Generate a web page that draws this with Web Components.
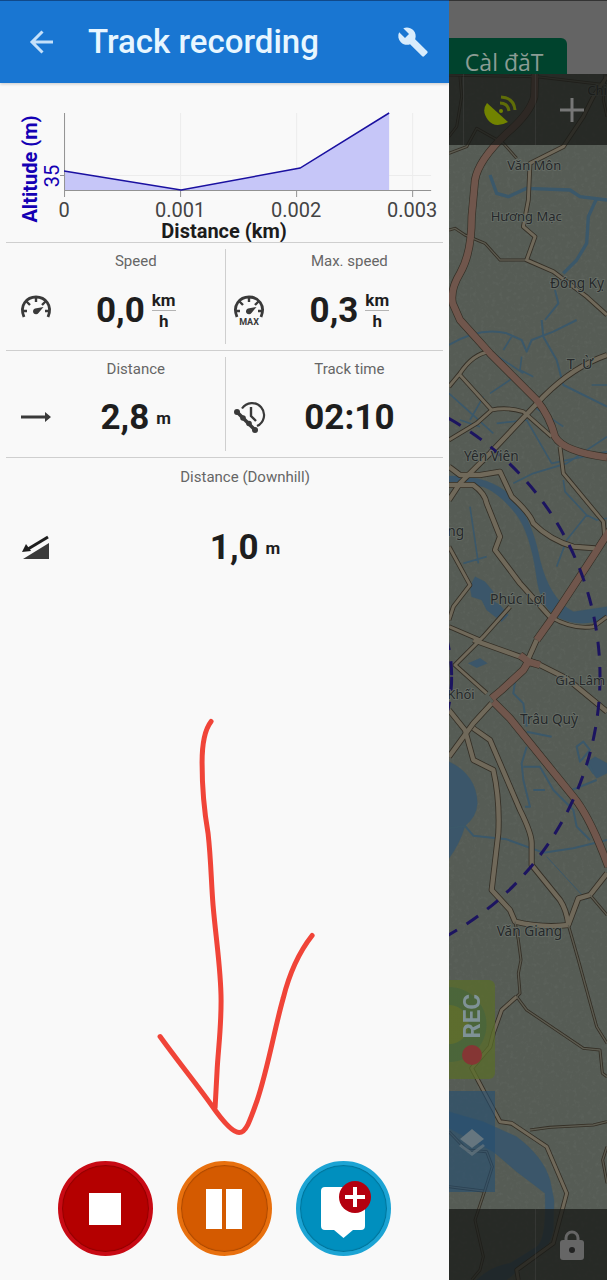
<!DOCTYPE html>
<html lang="en">
<head>
<meta charset="utf-8">
<meta name="viewport" content="width=device-width, initial-scale=1">
<title>Track recording</title>
<style>
  body {
    margin: 0;
    font-family: Roboto, sans-serif;
    background: #585e57;
  }
</style>
</head>
<body>
<track-app></track-app>

<script>
function define(name, html, setup) {
  const template = document.createElement('template');
  template.innerHTML = html;
  window.customElements.define(name, class extends HTMLElement {
    constructor() {
      super();
      this.attachShadow({mode: 'open'});
      this.shadowRoot.appendChild(template.content.cloneNode(true));
    }
    connectedCallback() {
      if (setup) setup(this, this.shadowRoot);
    }
  });
}

/* Drawer header */
define('drawer-header', `
  <style>
    :host {
      display: block;
      background: #1976d2;
      border-top: 1px solid #10498a;
      box-shadow: 0 1px 3px rgba(0, 0, 0, .2);
      color: #e8f6ff;
    }
    header {
      display: flex;
      align-items: center;
      height: 82px;
      padding: 0 18px 0 24px;
    }
    h1 {
      flex: 1;
      margin: 0 0 0 28px;
      font-size: 33px;
      font-weight: 500;
      line-height: 40px;
      white-space: nowrap;
    }
    button {
      display: grid;
      place-items: center;
      width: 36px;
      height: 40px;
      padding: 0;
      border: 0;
      background: none;
      color: inherit;
    }
    svg { display: block; }
  </style>
  <header>
    <button aria-label="Back">
      <svg width="36" height="36" viewBox="0 0 36 36" fill="none" stroke="#c4e0fa" stroke-width="3"><path d="M29 18H8M18.500 7.500 8 18l10.500 10.500"/></svg>
    </button>
    <h1><slot></slot></h1>
    <button aria-label="Settings">
      <svg width="32" height="32" viewBox="0 0 24 24" fill="#d8ecfc"><path d="M22.700 19l-9.100-9.100c.9-2.300.4-5-1.500-6.900-2-2-5-2.400-7.400-1.300L9 6 6 9 1.600 4.700C.4 7.100.9 10.100 2.900 12.100c1.900 1.900 4.600 2.400 6.900 1.500l9.100 9.100c.4.4 1 .4 1.400 0l2.300-2.300c.5-.4.5-1.100.1-1.400z"/></svg>
    </button>
  </header>
`);

/* Altitude profile */
define('altitude-chart', `
  <style>
    :host { display: block; }
    svg { display: block; width: 100%; }
    text { font-size: 20px; fill: #444; text-anchor: middle; }
    .title { font-weight: 700; fill: #1c1c1c; }
    .alt { fill: #1400b4; }
  </style>
  <svg viewBox="0 83 449 159" role="img" aria-label="Altitude by distance">
    <path d="M180.500 113v77M296.500 113v77M412.500 113v77M64 175.500h367" stroke="#ececec"/>
    <path d="M64 171 181 190 300 168 389 113V190H64z" fill="#c6c6f8"/>
    <path d="M64.500 113v84M60 175.500h4M64 190.500h367M180.500 190v7M296.500 190v7M412.500 190v7" fill="none" stroke="#929292"/>
    <path d="M64 171 181 190 300 168 389 113" fill="none" stroke="#1a10a0" stroke-width="1.500"/>
    <text x="64" y="217">0</text>
    <text x="180" y="217">0.001</text>
    <text x="296" y="217">0.002</text>
    <text x="412" y="217">0.003</text>
    <text class="title" x="224" y="238">Distance (km)</text>
    <text class="title alt" transform="translate(37 169) rotate(-90)">Altitude (m)</text>
    <text class="alt" transform="translate(59 176) rotate(-90)">35</text>
  </svg>
`);

/* One measured value: icon in its slot, label, number and unit */
define('stat-cell', `
  <style>
    :host {
      display: grid;
      grid-template: 36px 1fr / 30px 1fr;
      align-items: center;
      padding: 0 4px 0 15px;
      color: #1e1e1e;
    }
    :host([divided]) {
      margin: 6px 0;
      padding: 0 8px;
      border-left: 1px solid #cfcfcf;
      grid-template-rows: 24px 1fr;
    }
    .label {
      grid-column: 2;
      color: #666;
      font-size: 15px;
      line-height: 20px;
      text-align: center;
      white-space: nowrap;
    }
    .icon, .value { align-self: start; }
    .icon {
      height: 30px;
      margin-top: 15px;
      color: #3a3a3a;
    }
    .value {
      display: flex;
      align-items: center;
      justify-content: center;
      gap: 7px;
      margin-top: 11px;
      font-size: 35px;
      font-weight: 700;
      line-height: 40px;
    }
    :host([divided]) .value { margin-top: 17px; }
    :host([divided]) .icon { margin-top: 21px; }
    :host([tall]) { grid-template-rows: 38px 1fr; }
    :host([tall]) .value { margin-top: 32px; }
    :host([tall]) .icon { margin-top: 36px; }
    .unit {
      font-size: 17px;
      font-weight: 700;
      line-height: 20px;
      text-align: center;
    }
    .over {
      display: block;
      border-top: 1px solid #b4b4b4;
    }
    .unit:empty { display: none; }
  </style>
  <span class="label"></span>
  <span class="icon"><slot></slot></span>
  <span class="value"><span class="number"></span><span class="unit"></span></span>
`, (host, root) => {
  root.querySelector('.label').textContent = host.getAttribute('label');
  root.querySelector('.number').textContent = host.getAttribute('value');
  const [top, bottom] = (host.getAttribute('unit') || '').split('/');
  const unit = root.querySelector('.unit');
  unit.textContent = top;
  if (bottom) {
    const over = document.createElement('span');
    over.className = 'over';
    over.textContent = bottom;
    unit.appendChild(over);
  }
});

define('stat-icon', `
  <style>
    :host { display: block; width: 30px; height: 30px; }
    svg { display: block; overflow: visible; }
    text { font-size: 9px; font-weight: 700; text-anchor: middle; }
  </style>
  <svg width="30" height="30" viewBox="0 0 30 30" fill="currentColor"></svg>
`, (host, root) => {
  const gauge = `
    <path d="M3 23C-2 11 6 3 15 3s17 8 12 20" fill="none" stroke="currentColor" stroke-width="2.800"/>
    <path d="M15 3v5M5.500 7.500l3.500 3.500M24.500 7.500 21 11M2 17h4M24 17h4" stroke="currentColor" stroke-width="2.400"/>
    <path d="M14 14.500 22.500 13 17.500 19a3 3 0 1 1-3.500-4.500z"/>`;
  const icons = {
    speed: gauge,
    max: gauge + '<text x="15" y="31">MAX</text>',
    distance: '<path d="M0 13.500h24V10l6 5-6 5v-3.500H0z"/>',
    time: `
      <path d="M8 6.500A12 12 0 1 1 23 24" fill="none" stroke="currentColor" stroke-width="2.200"/>
      <path d="M17 5v9l5 5" fill="none" stroke="currentColor" stroke-width="2.400"/>
      <path d="M3 10 21 28" stroke="currentColor" stroke-width="3.500"/>
      <circle cx="3" cy="10" r="3"/><circle cx="9" cy="16" r="2.800"/><circle cx="15" cy="21.500" r="2.800"/><circle cx="21" cy="28" r="3"/>`,
    downhill: `
      <path d="M2 27 28 11v16z"/>
      <path d="M27 5 7 17" stroke="#1e1e1e" stroke-width="3"/>
      <path d="M1 20 5 12l5 7z" fill="#1e1e1e"/>`
  };
  root.querySelector('svg').innerHTML = icons[host.getAttribute('name')];
});

define('stat-grid', `
  <style>
    :host { display: block; padding: 0 6px; }
    .row {
      display: grid;
      grid-template-columns: 1fr 1fr;
      height: 107px;
      box-sizing: border-box;
      border-top: 1px solid #cfcfcf;
    }
    .row:first-of-type { height: 108px; }
    .last {
      grid-template-columns: 1fr;
      height: 115px;
    }
  </style>
  <div class="row">
    <stat-cell label="Speed" value="0,0" unit="km/h"><stat-icon name="speed"></stat-icon></stat-cell>
    <stat-cell divided label="Max. speed" value="0,3" unit="km/h"><stat-icon name="max"></stat-icon></stat-cell>
  </div>
  <div class="row">
    <stat-cell label="Distance" value="2,8" unit="m"><stat-icon name="distance"></stat-icon></stat-cell>
    <stat-cell divided label="Track time" value="02:10"><stat-icon name="time"></stat-icon></stat-cell>
  </div>
  <div class="row last">
    <stat-cell tall label="Distance (Downhill)" value="1,0" unit="m"><stat-icon name="downhill"></stat-icon></stat-cell>
  </div>
`);

/* Freehand arrow that points at the pause button */
define('hand-arrow', `
  <style>
    :host { display: block; flex: 1; min-height: 0; }
    svg { display: block; width: 100%; height: 100%; }
  </style>
  <svg viewBox="0 573 449 588" fill="none" stroke="#f04438" stroke-linecap="round" stroke-linejoin="round">
    <path d="M211 722C204 731 202 746 202 763C202 791 204 811 208 834C211 861 211 881 213 906C216 941 221 971 221 1001C221 1031 218 1051 217 1071L215 1108" stroke-width="5"/>
    <path d="M160 1037C178 1062 196 1084 211 1105C220 1118 232 1133 239 1133C246 1133 250 1121 257 1101C268 1068 274 1031 283 999C290 971 301 950 312 936" stroke-width="5"/>
  </svg>
`);

define('round-button', `
  <style>
    :host { display: block; }
    button {
      display: block;
      width: 95px;
      height: 95px;
      padding: 0;
      border: 4px solid var(--rim);
      border-radius: 50%;
      background: var(--face);
      box-shadow: inset 0 0 1px 1px rgba(0, 0, 0, .2);
    }
  </style>
  <button><slot></slot></button>
`, (host, root) => {
  root.querySelector('button').setAttribute('aria-label', host.getAttribute('label'));
});

define('record-controls', `
  <style>
    :host {
      display: flex;
      justify-content: center;
      gap: 24px;
      padding-bottom: 24px;
    }
    .stop { --face: #b40000; --rim: #c80a14; }
    .pause { --face: #d45a00; --rim: #e8700e; }
    .point { --face: #008fbe; --rim: #1ca4d4; }
    svg { display: block; margin: auto; }
  </style>
  <round-button class="stop" label="Stop">
    <svg width="87" height="87" fill="#fff"><path d="M27 28h32v32H27z"/></svg>
  </round-button>
  <round-button class="pause" label="Pause">
    <svg width="87" height="87" fill="#fff"><path d="M25 24h16v40H25zM45 24h16v40H45z"/></svg>
  </round-button>
  <round-button class="point" label="Add point">
    <svg width="87" height="87" fill="#fff">
      <path d="M25 22h36q4 0 4 4v35q0 4-4 4h-8l-9.500 8-9.500-8h-9q-4 0-4-4V26q0-4 4-4z"/>
      <circle cx="55" cy="32" r="16" fill="#b4000f"/>
      <path d="M53 22h4v8h8v4h-8v8h-4v-8h-8v-4h8z"/>
    </svg>
  </round-button>
`);

define('track-drawer', `
  <style>
    :host {
      display: flex;
      flex-direction: column;
      background: #f9f9f9;
    }
  </style>
  <drawer-header>Track recording</drawer-header>
  <altitude-chart></altitude-chart>
  <stat-grid></stat-grid>
  <hand-arrow></hand-arrow>
  <record-controls></record-controls>
`);

/* Map drawing: [kind, path] */
const roads = [
  ['minor', 'M27 225 290 230 501 255M60 230 65 290 50 380 27 410M495 222 490 300 501 350'],
  ['minor', 'M27 460 80 440 110 385 190 430 230 475M27 690 45 685 75 705 135 730 180 780 260 780'],
  ['road', 'M501 230 460 290 430 350 370 440 270 490 265 600 250 680 285 710 260 780 340 815 440 890 501 945'],
  ['road', 'M27 1160 60 1120Q100 1060 150 1055M60 1125 155 1230Q200 1220 250 1235L335 1310M27 1320 110 1270 155 1230M360 1340 370 1420 490 1565 495 1620'],
  ['main', 'M501 1065Q400 1100 310 1190L150 1360 60 1450 27 1500'],
  ['main', 'M27 1400 60 1425 120 1425 180 1415 215 1490Q270 1540 280 1570Q330 1620 400 1640L465 1645'],
  ['main', 'M27 1455 100 1455Q135 1480 140 1510L180 1610 165 1650 240 1750 330 1850'],
  ['road', 'M330 1850Q400 1890 460 1880L501 1850M27 1640 90 1755 40 1820 27 1860M27 1880 120 1920M210 1820 130 1910 45 1995 140 2080'],
  ['main', 'M100 1920 240 1970 300 1995 380 2035 501 2135M155 2110 100 2170 27 2270'],
  ['main', 'M27 2130 75 2190 100 2280 160 2310Q180 2400 175 2500L155 2670 210 2730 225 2765Q310 2785 385 2775L415 2695 450 2685 501 2620'],
  ['main', 'M100 2185 150 2220 240 2430Q275 2500 275 2530L275 2595 360 2700Q380 2730 385 2775'],
  ['minor', 'M385 2775 415 2880 470 3080 501 3130M225 2765 235 2820 243 2880 235 2920 240 2980 230 2990M450 2685 501 2745'],
  ['road', 'M230 2990 185 3030 160 3100 150 3140 95 3205 180 3365 215 3370 320 3440 380 3580 340 3730 230 3810 235 3840'],
  ['minor', 'M230 2990 260 3030 430 3145 480 3150 487 3220 501 3230M270 3390 330 3382 460 3375 501 3365'],
  ['minor', 'M27 3395 80 3450 140 3455 157 3500 135 3570 105 3660 130 3770 120 3810 95 3840M27 3560 130 3573M501 3440 488 3480 501 3550'],
  ['motorway', 'M285 222 283 290Q270 340 200 400Q115 480 105 540L95 650Q95 760 60 820Q30 870 38 910L60 960 150 1060 290 1200Q330 1250 345 1310Q370 1355 501 1372'],
  ['motorway', 'M510 1590 465 1660Q400 1760 340 1850L290 1920'],
  ['main', 'M290 1920 250 2010 185 2070'],
  ['motorway', 'M240 1965 265 1985 300 1995M265 1985 250 2010 185 2070 155 2095M160 2105 210 2155 400 2390Q450 2450 505 2600']
];

const casing = {minor: 9, road: 14, main: 18, motorway: 24};
const fill = {minor: 4, road: 9, main: 13, motorway: 20};

/* x, y, name, size */
const places = [
  [442, 284, 'Chi', 39], [202, 510, 'Văn Môn', 39], [152, 663, 'Hương Mạc', 39], [330, 864, 'Đóng Kỵ', 41],
  [380, 1107, 'T\u00a0\u00a0Ừ', 43], [72, 1383, 'Yên Viên', 41], [22, 1607, 'ng', 41], [150, 1813, 'Phúc Lợi', 42],
  [346, 2055, 'Gia Lâm', 39], [22, 2097, 'Khối', 39], [240, 2172, 'Trâu Quỳ', 41], [170, 2808, 'Văn Giang', 41]
];

define('map-canvas', `
  <style>
    :host { display: block; background: #565c55; }
    svg { display: block; width: 100%; height: 100%; }
    path { fill: none; stroke-linejoin: round; }
    .water path, .lakes path { stroke: #3b586a; }
    .lakes path { fill: #3b566a; }
    .casing { stroke: #342f26; }
    .fill { stroke: #70695a; }
    .fill.motorway { stroke: #70564c; }
    .fill.minor { stroke: #5c5b50; }
    .range { fill: none; stroke: #1c1460; stroke-width: 9; stroke-dasharray: 42 34; }
    text {
      font-family: "Noto Sans", sans-serif;
      fill: #25282a;
      stroke: #676e67;
      stroke-width: 5;
      paint-order: stroke;
    }
  </style>
  <svg viewBox="27 0 474 3840" preserveAspectRatio="xMinYMin slice">
    <filter id="grain" x="0" y="0" width="100%" height="100%">
      <feTurbulence type="fractalNoise" baseFrequency=".09" numOctaves="3" seed="4"/>
      <feColorMatrix values="0 0 0 0 .15  0 0 0 0 .17  0 0 0 0 .15  2 0 0 0 -1"/>
    </filter>
    <rect x="27" width="474" height="3840" filter="url(#grain)" opacity=".35"/>
    <g class="lakes">
      <path d="M27 1428Q150 1425 215 1490Q275 1550 300 1680Q330 1800 400 1835L501 1820V1855Q420 1885 360 1855Q300 1830 288 1720Q270 1600 230 1545Q180 1480 130 1460L27 1445z"/>
      <path d="M27 2285Q110 2325 112 2410Q110 2450 75 2478Q60 2530 27 2575z"/>
      <path d="M27 3335 130 3365 230 3410Q310 3470 330 3540L342 3600 340 3690Q330 3745 290 3765L200 3840H110Q150 3800 210 3790L290 3740Q320 3720 315 3580Q290 3560 230 3515L160 3455 27 3385z"/>
      <path d="M85 1990 120 1975 142 1990 110 2003zM435 2290 465 2270 501 2290V2320L470 2335zM90 1760 105 1730 135 1745 160 1775 155 1800 180 1815 205 1845 185 1865 140 1830 125 1800 95 1790z"/>
    </g>
    <g class="water">
      <path stroke-width="10" d="M150 525 170 580 205 590 260 565 390 570 420 590 501 600M470 595 445 650 440 730 410 780 370 820"/>
      <path stroke-width="6" d="M345 870 355 910 315 960M27 1035Q120 980 200 1000L245 1020 260 1055 275 1020 340 995 410 960M305 960 310 1010 350 1080 370 1155 501 1220"/>
      <path stroke-width="5" d="M190 1050 215 1010M160 1060 250 1120M150 1180 210 1140 215 1125M245 1070 240 1110 280 1130M120 1280 60 1260M27 1180 160 1300M90 1260 130 1190M260 1260 335 1390 501 1355M220 1450 280 1420 380 1390 501 1310M370 1440 375 1475 440 1545 380 1620 350 1700M440 1545 470 1560 501 1555M90 1520 115 1690M70 1690 140 1670M170 1270 260 1260M280 1220 370 1280M455 1155 501 1155"/>
      <path stroke-width="6" d="M225 2045 220 2080 250 2110 260 2180M260 2195 335 2210M260 2240 245 2290 250 2340 270 2420 255 2420M250 2300 300 2300 340 2370 400 2430 410 2480 450 2520M280 2370 315 2370M410 2240 430 2225 450 2250 420 2285zM440 2280 460 2320M395 2370 470 2340M27 2485 75 2478 100 2507 200 2518 310 2558 400 2545 501 2520"/>
      <path stroke-width="3" d="M320 2570 440 2700"/>
    </g>
    <g class="roads"></g>
    <circle class="range" cx="-408" cy="2030" r="888"/>
    <circle class="range" cx="-408" cy="2030" r="443"/>
    <g class="places"></g>
  </svg>
`, (host, root) => {
  const lines = (layer, width) => roads.map(([kind, d]) =>
    `<path class="${layer} ${kind}" stroke-width="${width[kind]}" d="${d}"/>`).join('');
  root.querySelector('.roads').innerHTML = lines('casing', casing) + lines('fill', fill);
  root.querySelector('.places').innerHTML = places.map(([x, y, name, size]) =>
    `<text x="${x}" y="${y}" font-size="${size}">${name}</text>`).join('');
});

define('map-bar', `
  <style>
    :host {
      display: grid;
      grid-template-columns: 14px 1fr 1fr;
      height: 71px;
      background: rgba(24, 25, 23, .75);
    }
    ::slotted(button) { border-left: 1px solid rgba(90, 90, 90, .25) !important; }
  </style>
  <slot></slot>
`);

define('map-view', `
  <style>
    :host {
      position: relative;
      display: flex;
      flex-direction: column;
      overflow: hidden;
    }
    map-canvas { position: absolute; inset: 0; }
    .ad, map-bar, .side { position: relative; }
    button {
      display: grid;
      place-items: center;
      padding: 0;
      border: 0;
      background: none;
      font: inherit;
    }
    .ad {
      display: flex;
      align-items: flex-start;
      height: 36px;
      padding-top: 37px;
      border-top: 1px solid #333;
      background: #646464;
      overflow: hidden;
    }
    .ad a {
      width: 118px;
      border-radius: 0 6px 0 0;
      background: #00432d;
      color: #8b9c94;
      font: 23px/48px "Open Sans", sans-serif;
      text-align: center;
      text-decoration: none;
      box-sizing: border-box;
      padding-right: 8px;
    }
    .side {
      display: grid;
      gap: 12px;
      width: 46px;
      margin: auto 0 17px;
    }
    .rec {
      grid-template-rows: auto auto;
      align-content: center;
      gap: 6px;
      height: 99px;
      border-radius: 0 6px 6px 0;
      background:
        radial-gradient(circle at 0 45%, #5f6e2cc0 19px, #47643cc0 20px 37px, transparent 38px),
        rgba(90, 108, 42, .75);
      color: #7f9296;
      font-size: 24px;
      font-weight: 700;
      line-height: 24px;
    }
    .rec span { writing-mode: vertical-rl; transform: rotate(180deg); }
    .rec i {
      width: 20px;
      height: 20px;
      border-radius: 50%;
      background: #853634;
    }
    .layers {
      height: 101px;
      background: rgba(36, 78, 114, .6);
      color: #66767f;
    }
    svg { display: block; }
  </style>
  <map-canvas></map-canvas>
  <div class="ad"><a href="#">Càl đăT</a></div>
  <map-bar>
    <span></span>
    <button aria-label="GPS">
      <svg width="34" height="34" viewBox="0 0 34 34" fill="#718300">
        <path d="M4 10 25 29Q12 36 5 27T4 10z"/>
        <circle cx="18" cy="18" r="2"/>
        <g fill="none" stroke="#5f6d08" stroke-width="3"><path d="M17 10q8 0 9 8M18 4q13 1 14 13"/></g>
      </svg>
    </button>
    <button aria-label="Add">
      <svg width="24" height="24" stroke="#777" stroke-width="3"><path d="M0 12h24M12 0v24"/></svg>
    </button>
  </map-bar>
  <div class="side">
    <button class="rec"><span>REC</span><i></i></button>
    <button class="layers" aria-label="Map layers">
      <svg width="26" height="28" viewBox="0 0 26 28" fill="currentColor"><path d="M13 1 25 11 13 20 1 11z"/><path d="M2 16 13 24 24 16 26 18 13 28 0 18z" opacity=".7"/></svg>
    </button>
  </div>
  <map-bar>
    <span></span>
    <span></span>
    <button aria-label="Lock screen">
      <svg width="24" height="30" viewBox="0 0 24 30"><path d="M6 12V8a6 6 0 0 1 12 0v4" fill="none" stroke="#666" stroke-width="3"/><rect y="10" width="24" height="20" rx="3" fill="#666"/><circle cx="12" cy="20" r="3" fill="#222"/></svg>
    </button>
  </map-bar>
`);

define('track-app', `
  <style>
    :host {
      display: grid;
      grid-template-columns: 74% 1fr;
      min-height: 100vh;
    }
  </style>
  <track-drawer></track-drawer>
  <map-view></map-view>
`);
</script>
</body>
</html>
